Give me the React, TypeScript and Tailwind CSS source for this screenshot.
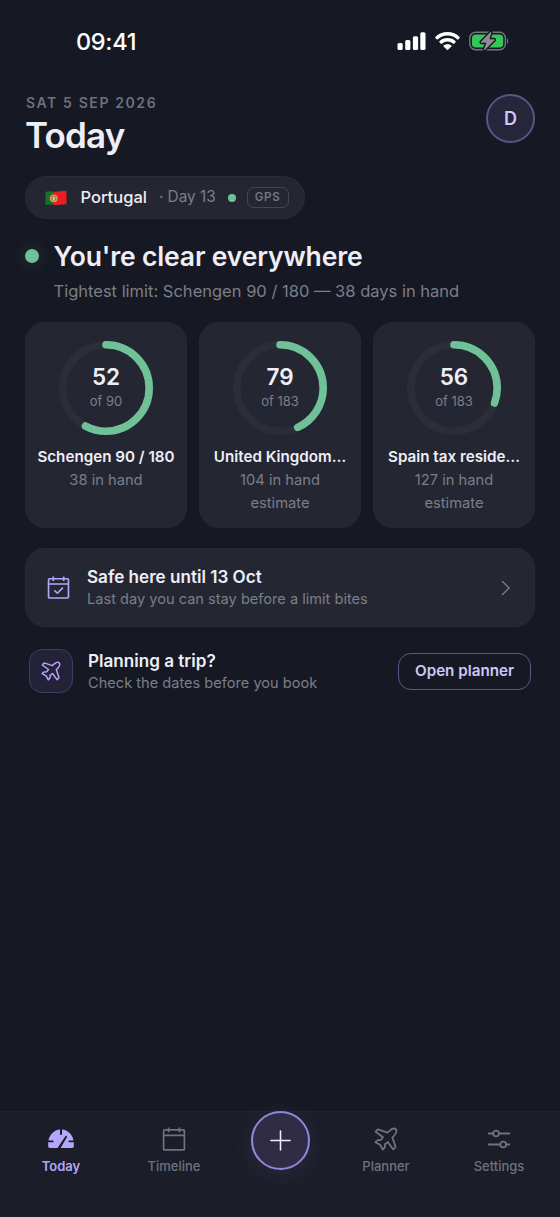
import React from 'react';

interface Limit {
  name: string;
  used: number;
  total: number;
  left: string;
  estimate?: boolean;
}

const limits: Limit[] = [
  { name: 'Schengen 90 / 180', used: 52, total: 90, left: '38 in hand' },
  { name: 'United Kingdom…', used: 79, total: 183, left: '104 in hand', estimate: true },
  { name: 'Spain tax reside…', used: 56, total: 183, left: '127 in hand', estimate: true },
];

const RADIUS = 43.2;
const CIRCUMFERENCE = 2 * Math.PI * RADIUS;

const PlaneIcon: React.FC<{ size: number; className?: string }> = ({ size, className }) => (
  <svg width={size} height={size} viewBox="0 0 24 24" fill="none" stroke="currentColor" strokeWidth="1.8" strokeLinejoin="round" strokeLinecap="round" className={className}>
    <path d="M13.4 5.6 16 3.4C17.4 2.1 18.6 1.4 20.2 1.5 21.8 1.6 22.4 2.2 22.5 3.8 22.6 5.4 21.9 6.6 20.6 8L18.4 10.6 21.4 19.2C21.6 20 21.5 20.4 21 20.9L19.2 22.4 13.8 15 11 17.2 10.8 20.4 8.8 22.6 6.2 17.8 1.4 15.2 3.6 13.2 6.8 13 9 10.2 1.6 4.8 3.1 3C3.6 2.500 4 2.400 4.800 2.600Z" />
  </svg>
);

const CalendarIcon: React.FC<{ size: number; checked?: boolean; className?: string }> = ({ size, checked, className }) => (
  <svg width={size} height={size} viewBox="0 0 24 24" fill="none" stroke="currentColor" strokeWidth="1.7" strokeLinejoin="round" className={className}>
    <rect x="1.6" y="2.9" width="20.8" height="20" rx="1" />
    <path d="M1.6 8.4h20.8M6.6.4v4.8M17.4.4v4.8" />
    {checked && <path d="m7.6 15 3.3 3 5.7-5.8" />}
  </svg>
);

const GaugeIcon: React.FC = () => (
  <svg width="26" height="20" viewBox="0 0 26 20" fill="currentColor">
    <path d="M12 .6v4.3a1 1 0 0 0 2 0V.6c3 .2 5.6 1.5 7.6 3.5 2 2 3.5 4.6 3.9 7.4h-4.2a.9.9 0 0 0 0 1.8h4.5v3.9c0 1-.7 1.7-1.7 1.7H12.6L18.9 8.2a.9.9 0 0 0-1.5-1L10 18.3c-.2.2-.2.4-.3.6H1.9c-1 0-1.7-.7-1.7-1.7v-3.9h4.5a.9.9 0 0 0 0-1.8H.5C.9 8.7 2.4 6.1 4.4 4.1 6.4 2.1 9 .8 12 .6Z" />
  </svg>
);

const SettingsIcon: React.FC = () => (
  <svg width="24" height="20" viewBox="0 0 24 20" fill="none" stroke="currentColor" strokeWidth="1.8" strokeLinecap="round">
    <path d="M1.7 4.5h4.500M12 4.500h10.300M1.700 15.500h11.600M19.100 15.500h3.200" />
    <circle cx="9.1" cy="4.5" r="2.9" />
    <circle cx="16.2" cy="15.5" r="2.9" />
  </svg>
);

const StatusBar: React.FC = () => (
  <div className="flex h-[83px] items-center justify-between pr-[51px] pl-[76px] text-white">
    <span className="text-[23.5px] font-medium tracking-[-0.3px]">09:41</span>
    <div className="flex items-center gap-[9px] pb-px">
      <svg width="29" height="18" viewBox="0 0 29 18" fill="currentColor">
        <rect x="0.5" y="11" width="5.2" height="7" rx="1.5" />
        <rect x="8.2" y="8" width="5.2" height="10" rx="1.5" />
        <rect x="15.9" y="4.3" width="5.2" height="13.7" rx="1.5" />
        <rect x="23.3" y="0.3" width="5.2" height="17.7" rx="1.5" />
      </svg>
      <svg width="25" height="18" viewBox="0 0 25 18" fill="currentColor">
        <path d="M12.5 0C17.3 0 21.6 1.9 24.6 4.9c.3.3.3.7 0 1L23.2 7.4c-.2.2-.6.2-.9 0a14.2 14.2 0 0 0-19.6 0c-.3.2-.7.2-.9 0L.4 5.9c-.3-.3-.3-.7 0-1C3.4 1.9 7.7 0 12.5 0Z" />
        <path d="M12.5 6.1c3.2 0 6 1.2 8.1 3.2.3.3.3.7 0 1l-1.5 1.5c-.2.2-.6.2-.9 0a8.4 8.4 0 0 0-11.4 0c-.3.2-.7.2-.9 0L4.4 10.3c-.3-.3-.3-.7 0-1 2.1-2 4.9-3.2 8.1-3.2Z" />
        <path d="M12.5 12.2c1.500 0 2.900.5 3.900 1.400.3.3.3.7 0 1L13 17.8c-.3.3-.7.3-1 0l-3.400-3.200c-.3-.3-.3-.7 0-1 1-.9 2.400-1.400 3.900-1.400Z" />
      </svg>
      <svg width="40" height="22" viewBox="0 0 40 22">
        <rect x="0.8" y="2.2" width="35.6" height="17.6" rx="5.8" fill="none" stroke="#74767d" strokeWidth="1.4" />
        <rect x="3" y="4.4" width="31.2" height="13.2" rx="3.8" fill="#34c759" />
        <path d="M38 8.2c1.6.6 1.6 5 0 5.6Z" fill="#74767d" />
        <path d="M21.3 2.2 12 11.7c-.4.5-.2 1.1.5 1.1h4.800l-2.300 6.400c-.2.8.6 1.1 1.100.6L25.500 10.300c.4-.5.2-1.100-.5-1.100h-4.600l1.900-6.400c.2-.8-.5-1.100-1-.6Z" fill="#8e8b91" stroke="#161923" strokeWidth="2.8" paintOrder="stroke" />
      </svg>
    </div>
  </div>
);

const PortugalFlag: React.FC = () => (
  <svg width="22" height="16" viewBox="0 0 22 16">
    <path d="M.5 2C3.5.5 6 1.5 9 1.7V15C6 14.8 3.500 13.700.5 15.200Z" fill="#1b6f2e" />
    <path d="M8.7 1.7C13 2 17 .5 21.5.9V14.2C17 13.8 13 15.4 8.7 15Z" fill="#ec1c24" />
    <circle cx="8.7" cy="8.3" r="3.3" fill="#b08a35" stroke="#c9ad45" strokeWidth="1.2" />
    <path d="M7.2 6.6h3v2.3c0 2-3 2-3 0Z" fill="#eee" stroke="#d8342a" strokeWidth="0.7" />
    <circle cx="8.7" cy="8.2" r="0.5" fill="#274b9b" />
  </svg>
);

const LimitCard: React.FC<{ limit: Limit }> = ({ limit }) => (
  <div className="flex h-[206px] flex-col items-center rounded-[20px] border border-[#262934] bg-[#242732] pt-[18px]">
    <div className="grid h-[94px] w-[94px] place-items-center">
      <svg width="94" height="94" viewBox="0 0 94 94" fill="none" strokeWidth="7.6" className="col-start-1 row-start-1 -rotate-90">
        <circle cx="47" cy="47" r={RADIUS} stroke="#2b2e39" />
        <circle
          cx="47"
          cy="47"
          r={RADIUS}
          stroke="#70c198"
          strokeLinecap="round"
          strokeDasharray={`${(limit.used / limit.total) * CIRCUMFERENCE} ${CIRCUMFERENCE}`}
        />
      </svg>
      <div className="col-start-1 row-start-1 -mt-[3px] flex flex-col items-center">
        <span className="text-[22.5px] leading-[27px] font-semibold text-[#eeeef8]">{limit.used}</span>
        <span className="mt-[2px] text-[13px] leading-[18px] text-[#7c7e88]">of {limit.total}</span>
      </div>
    </div>
    <span className="mt-[11px] text-[15.2px] leading-[22px] font-semibold whitespace-nowrap text-[#eeeef8]">{limit.name}</span>
    <span className="mt-px text-[14.7px] leading-[23px] text-[#7c7e88]">{limit.left}</span>
    {limit.estimate && <span className="text-[14.7px] leading-[23px] text-[#7c7e88]">estimate</span>}
  </div>
);

const TabItem: React.FC<{ label: string; active?: boolean; children: React.ReactNode }> = ({ label, active, children }) => (
  <button className={`flex h-[62px] w-[113px] flex-col items-center ${active ? 'text-[#b4a7fa]' : 'text-[#70727d]'}`}>
    <span className="flex h-[32px] items-center">{children}</span>
    <span className={`mt-[2px] text-[13px] leading-[18px] ${active ? 'font-semibold' : 'font-medium'}`}>{label}</span>
  </button>
);

const TabBar: React.FC = () => (
  <nav className="mt-auto flex h-[106px] justify-center border-t border-[#20232d] bg-[#1b1d28] pt-[11px]">
    <TabItem label="Today" active>
      <GaugeIcon />
    </TabItem>
    <TabItem label="Timeline">
      <CalendarIcon size={24} />
    </TabItem>
    <div className="flex w-[99px] justify-center">
      <button
        aria-label="Add"
        className="-mt-3 flex h-[59px] w-[59px] items-center justify-center rounded-full border-2 border-[#9486d8] bg-[#302c46] text-[#eeeef8] shadow-[0_4px_24px_rgba(148,134,216,0.14)]"
      >
        <svg width="21" height="21" viewBox="0 0 20 20" stroke="currentColor" strokeWidth="1.5" strokeLinecap="round">
          <path d="M10 .9v18.2M.9 10h18.2" />
        </svg>
      </button>
    </div>
    <TabItem label="Planner">
      <PlaneIcon size={24} />
    </TabItem>
    <TabItem label="Settings">
      <SettingsIcon />
    </TabItem>
  </nav>
);

const App: React.FC = () => {
  return (
    <div className="flex h-[1217px] w-[560px] flex-col overflow-hidden bg-[#161923] font-['Inter',sans-serif]">
      <StatusBar />

      <main className="flex flex-col px-[25px]">
        {/* Header */}
        <header className="flex items-start justify-between pt-[11px]">
          <div>
            <p className="pl-px text-[14px] leading-[18px] font-semibold tracking-[1.6px] text-[#6e707b]">SAT 5 SEP 2026</p>
            <h1 className="mt-[2px] text-[35px] leading-[42px] font-semibold tracking-[-0.8px] text-[#eeeef8]">Today</h1>
          </div>
          <div className="flex h-[49px] w-[49px] items-center justify-center rounded-full border-2 border-[#5a5485] bg-[#25253b] text-[18px] font-semibold text-[#cdc7fa]">
            D
          </div>
        </header>

        {/* Current location */}
        <div className="mt-[20px] flex h-[43px] w-[280px] items-center rounded-full border border-[#2a2d38] bg-[#242732] pl-[19px]">
          <PortugalFlag />
          <span className="ml-[13.5px] text-[16.5px] font-medium text-[#eeeef8]">Portugal</span>
          <span className="ml-[12px] text-[15.3px] text-[#7c7e88]">· Day 13</span>
          <span className="ml-[12px] h-2 w-2 rounded-full bg-[#70c198]" />
          <span className="ml-[11px] flex h-[21px] w-[42px] items-center justify-center rounded-[7px] border border-[#454853] text-[11.5px] font-semibold tracking-[0.8px] text-[#747681]">
            GPS
          </span>
        </div>

        {/* Overall status */}
        <section className="mt-[20px]">
          <div className="flex items-center">
            <span className="h-[14px] w-[14px] rounded-full bg-[#70c198] shadow-[0_0_16px_rgba(112,193,152,0.2)]" />
            <h2 className="ml-[14.5px] text-[26.5px] leading-[34px] font-semibold tracking-[-0.15px] text-[#eeeef8]">You're clear everywhere</h2>
          </div>
          <p className="mt-[7px] ml-[28.5px] text-[16.5px] leading-[22px] text-[#7c7e88]">
            Tightest limit: Schengen 90 / 180 — 38 days in hand
          </p>
        </section>

        <div className="mt-[20px] grid grid-cols-3 gap-3">
          {limits.map((limit) => (
            <LimitCard key={limit.name} limit={limit} />
          ))}
        </div>

        {/* Safe until */}
        <div className="mt-[20px] flex h-[79px] items-center rounded-[20px] border border-[#282b36] bg-[#242732] pr-[23px] pl-[21px]">
          <CalendarIcon size={23} checked className="text-[#b4a7fa]" />
          <div className="ml-[17px]">
            <p className="text-[17.1px] leading-[23px] font-semibold text-[#eeeef8]">Safe here until 13 Oct</p>
            <p className="text-[14.6px] leading-[22px] text-[#7c7e88]">Last day you can stay before a limit bites</p>
          </div>
          <svg width="10" height="16" viewBox="0 0 10 16" fill="none" stroke="#7c7e88" strokeWidth="1.3" strokeLinecap="round" className="ml-auto">
            <path d="m1.5 1.5 6.6 6.5-6.6 6.5" />
          </svg>
        </div>

        {/* Trip planner */}
        <div className="mt-[21px] flex items-center px-1">
          <div className="flex h-[44px] w-[44px] items-center justify-center rounded-[13px] border border-[#413d61] bg-[#232239]">
            <PlaneIcon size={20} className="text-[#b4a7fa]" />
          </div>
          <div className="ml-[15px] pt-[2px]">
            <p className="text-[17.1px] leading-[22px] font-semibold text-[#eeeef8]">Planning a trip?</p>
            <p className="text-[14.6px] leading-[22px] text-[#7c7e88]">Check the dates before you book</p>
          </div>
          <button className="ml-auto h-[37px] w-[133px] rounded-[13px] border border-[#5d5788] pt-px text-[15.2px] font-semibold text-[#cdc7fa]">
            Open planner
          </button>
        </div>
      </main>

      <TabBar />
    </div>
  );
};

export default App;
